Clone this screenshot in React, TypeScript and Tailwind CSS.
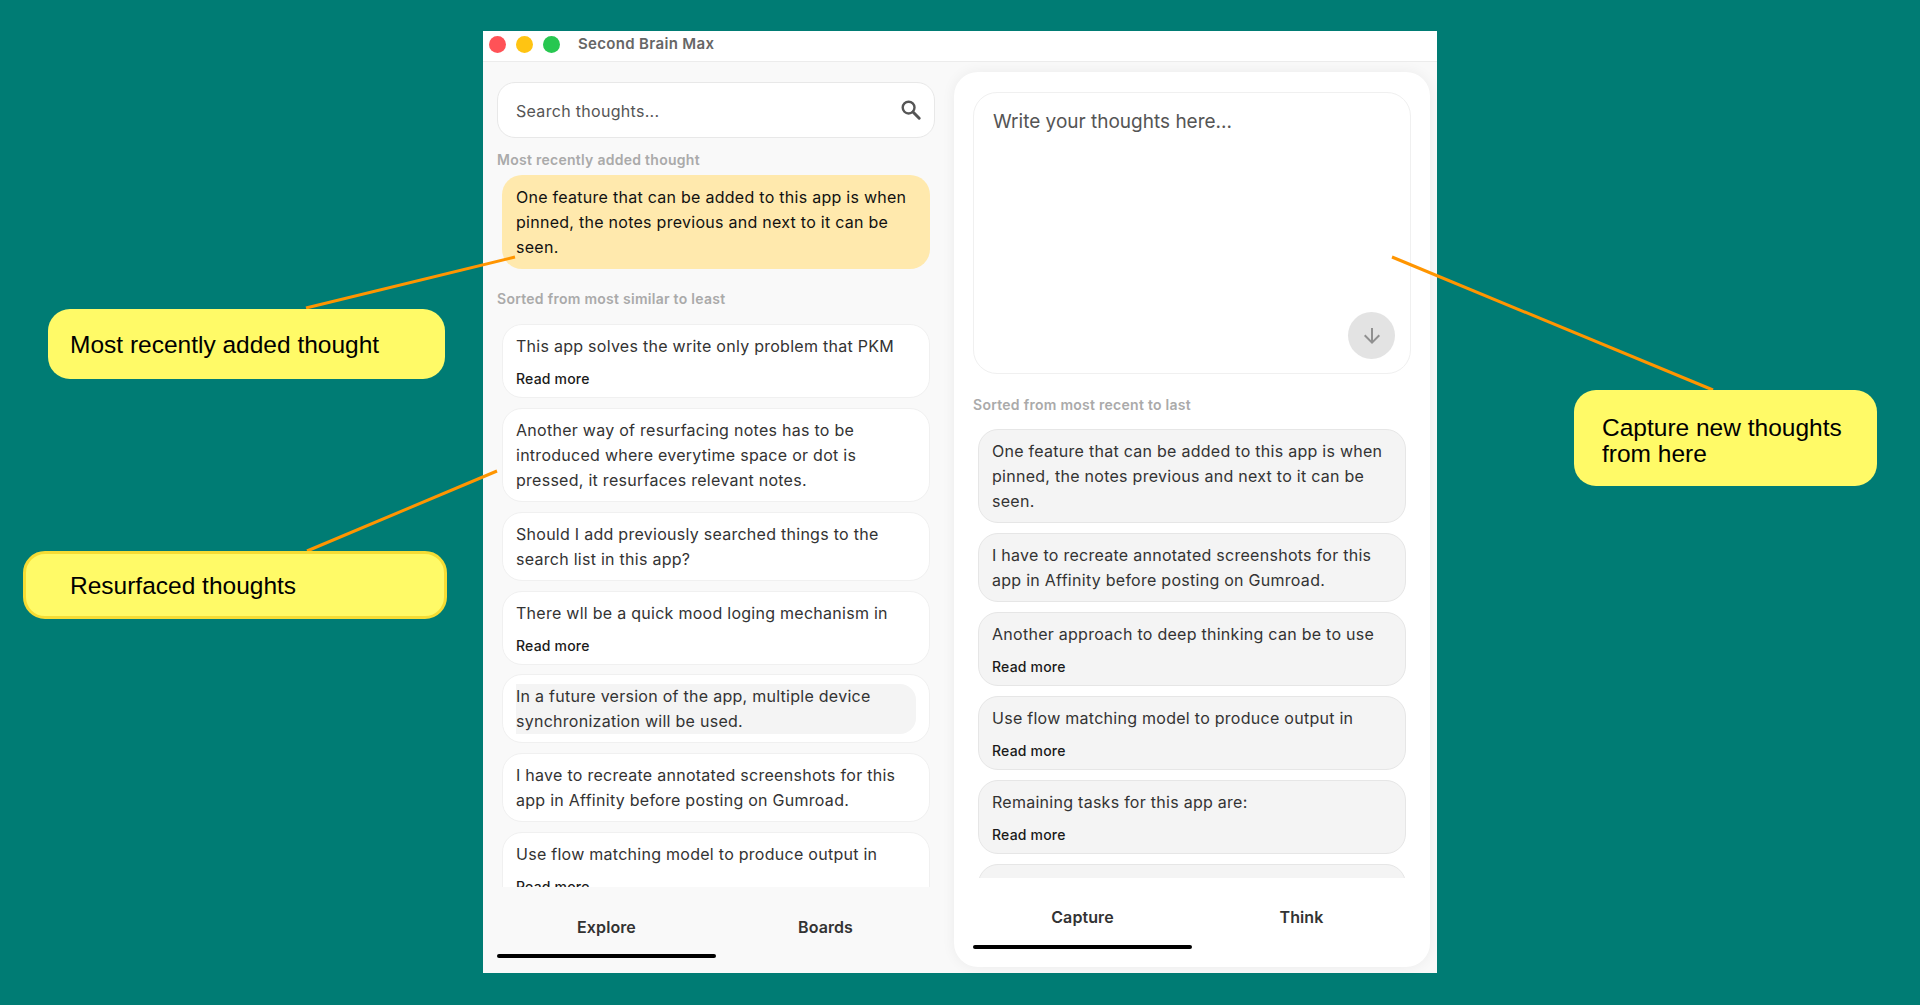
import { MdArrowDownward } from "react-icons/md";

const LEFT_NOTES = [
    { text: "This app solves the write only problem that PKM", more: true },
    { text: "Another way of resurfacing notes has to be introduced where everytime space or dot is pressed, it resurfaces relevant notes." },
    { text: "Should I add previously searched things to the search list in this app?" },
    { text: "There wll be a quick mood loging mechanism in", more: true },
    { text: "In a future version of the app, multiple device synchronization will be used.", highlight: true },
    { text: "I have to recreate annotated screenshots for this app in Affinity before posting on Gumroad." },
    { text: "Use flow matching model to produce output in", more: true },
];

const RIGHT_NOTES = [
    { text: "One feature that can be added to this app is when pinned, the notes previous and next to it can be seen." },
    { text: "I have to recreate annotated screenshots for this app in Affinity before posting on Gumroad." },
    { text: "Another approach to deep thinking can be to use", more: true },
    { text: "Use flow matching model to produce output in", more: true },
    { text: "Remaining tasks for this app are:", more: true },
];

type Note = { text: string; more?: boolean; highlight?: boolean };

function NoteCard({ note, tone }: { note: Note; tone: "white" | "gray" }) {
    const toneClass = tone === "white" ? "bg-white border-[#f0f0f0]" : "bg-[#f4f4f4] border-[#e6e6e6]";
    return (
        <div className={`shrink-0 rounded-[20px] border px-[13px] pb-[8px] pt-[9px] ${toneClass}`}>
            <p className={`text-[16px] leading-[25px] tracking-[0.27px] text-[#333] ${note.highlight ? "rounded-r-[16px] bg-[#f4f4f4]" : ""}`}>
                {note.text}
            </p>
            {note.more && <div className="mt-[10px] text-[14px] leading-[20px] tracking-[0.2px] font-medium text-[#1a1a1a]">Read more</div>}
        </div>
    );
}

function SectionLabel({ children }: { children: string }) {
    return <div className="text-[14px] leading-[20px] tracking-[0.27px] font-semibold text-[#aaaaaa]">{children}</div>;
}

function Tabs({ active, other, lineGap }: { active: string; other: string; lineGap: string }) {
    return (
        <div className="grid grid-cols-2">
            <div className="flex flex-col items-center">
                <span className="text-[16px] leading-[24px] tracking-[0.1px] font-semibold text-[#333]">{active}</span>
                <div className={`h-[4px] w-full rounded-full bg-black ${lineGap}`} />
            </div>
            <div className="flex flex-col items-center">
                <span className="text-[16px] leading-[24px] tracking-[0.1px] font-semibold text-[#333]">{other}</span>
            </div>
        </div>
    );
}

function Callout({ className, children }: { className: string; children: React.ReactNode }) {
    return (
        <div className={`absolute flex items-center rounded-[22px] bg-[#fffa67] text-[24.5px] leading-[26px] text-black font-['Liberation_Sans',Arial,sans-serif] ${className}`}>
            <div>{children}</div>
        </div>
    );
}

export default function App() {
    return (
        <div className="relative h-[1005px] w-[1920px] overflow-hidden bg-[#007c74] pl-[483px] pt-[31px] font-['Inter',sans-serif]">
            <div className="flex h-[942px] w-[954px] flex-col bg-[#f9f9f9]">
                <div className="flex h-[31px] shrink-0 items-center border-b border-[#ececec] bg-white pb-[3px]">
                    <span className="ml-[6px] h-[17px] w-[17px] rounded-full bg-[#ff5257]" />
                    <span className="ml-[10px] h-[17px] w-[17px] rounded-full bg-[#ffc412]" />
                    <span className="ml-[10px] h-[17px] w-[17px] rounded-full bg-[#27c750]" />
                    <span className="ml-[18px] text-[15px] font-semibold tracking-[0.33px] text-[#666]">Second Brain Max</span>
                </div>

                <div className="flex min-h-0 flex-1">
                    {/* Explore pane */}
                    <div className="flex w-[471px] shrink-0 flex-col">
                        <div className="ml-[14px] mr-[19px] mt-[20px] flex h-[56px] shrink-0 items-center justify-between rounded-[18px] border border-[#e8e8e8] bg-white pl-[18px] pr-[11px]">
                            <span className="pt-[2px] text-[16px] tracking-[0.3px] text-[#555]">Search thoughts...</span>
                            <svg width="24" height="24" viewBox="0 0 24 24" fill="none" stroke="#555" strokeWidth="2.4">
                                <circle cx="9.6" cy="9.6" r="5.9" />
                                <path d="M14 14l6.2 6.2" strokeWidth="3" strokeLinecap="round" />
                            </svg>
                        </div>
                        <div className="ml-[14px] mt-[12px]">
                            <SectionLabel>Most recently added thought</SectionLabel>
                        </div>
                        <div className="ml-[19px] mr-[24px] mt-[5px] shrink-0 rounded-[20px] bg-[#ffe9ad] px-[14px] pb-[9px] pt-[10px] text-[16px] leading-[25px] tracking-[0.27px] text-[#111]">
                            One feature that can be added to this app is when pinned, the notes previous and next to it can be seen.
                        </div>
                        <div className="ml-[14px] mt-[20px]">
                            <SectionLabel>Sorted from most similar to least</SectionLabel>
                        </div>
                        <div className="ml-[19px] mr-[24px] mt-[15px] flex min-h-0 flex-1 flex-col gap-[9.85px] overflow-hidden">
                            {LEFT_NOTES.map((note) => (
                                <NoteCard key={note.text} note={note} tone="white" />
                            ))}
                        </div>
                        <div className="ml-[14px] mr-[19px] h-[86px] shrink-0 pt-[28px]">
                            <Tabs active="Explore" other="Boards" lineGap="mt-[15px]" />
                        </div>
                    </div>

                    {/* Capture pane */}
                    <div className="mb-[6px] mr-[7px] mt-[10px] flex w-[476px] shrink-0 flex-col rounded-[24px] bg-white shadow-[0_0_14px_rgba(0,0,0,0.06)]">
                        <div className="relative mx-[19px] mt-[20px] h-[282px] shrink-0 rounded-[24px] border border-[#f0f0f0] pl-[19px] pt-[15px]">
                            <span className="text-[19px] leading-[28px] text-[#555]">Write your thoughts here...</span>
                            <div className="absolute bottom-[14px] right-[15px] flex h-[47px] w-[47px] items-center justify-center rounded-full bg-[#e3e3e3]">
                                <MdArrowDownward size={24} className="text-[#909090]" />
                            </div>
                        </div>
                        <div className="ml-[19px] mt-[21px]">
                            <SectionLabel>Sorted from most recent to last</SectionLabel>
                        </div>
                        <div className="mx-[24px] mt-[14px] flex min-h-0 flex-1 flex-col gap-[10px] overflow-hidden">
                            {RIGHT_NOTES.map((note) => (
                                <NoteCard key={note.text} note={note} tone="gray" />
                            ))}
                            <div className="h-[40px] shrink-0 rounded-[20px] border border-[#e6e6e6] bg-[#f4f4f4]" />
                        </div>
                        <div className="mx-[19px] h-[89px] shrink-0 pt-[27px]">
                            <Tabs active="Capture" other="Think" lineGap="mt-[16px]" />
                        </div>
                    </div>
                </div>
            </div>

            {/* Annotations */}
            <svg className="pointer-events-none absolute left-0 top-0" width="1920" height="1005" fill="none" stroke="#ff9500" strokeWidth="3">
                <line x1="306" y1="308" x2="515" y2="257" />
                <line x1="307" y1="551" x2="497" y2="471" />
                <line x1="1392" y1="257" x2="1713" y2="390" />
            </svg>
            <Callout className="left-[48px] top-[309px] h-[70px] w-[397px] pl-[22px] pt-[2px]">Most recently added thought</Callout>
            <Callout className="left-[23px] top-[551px] h-[68px] w-[424px] border-[3px] border-[#f6dc34] pl-[44px] pt-[2px]">Resurfaced thoughts</Callout>
            <Callout className="left-[1574px] top-[390px] h-[96px] w-[303px] pl-[28px] pt-[6px]">
                Capture new thoughts
                <br />
                from here
            </Callout>
        </div>
    );
}
